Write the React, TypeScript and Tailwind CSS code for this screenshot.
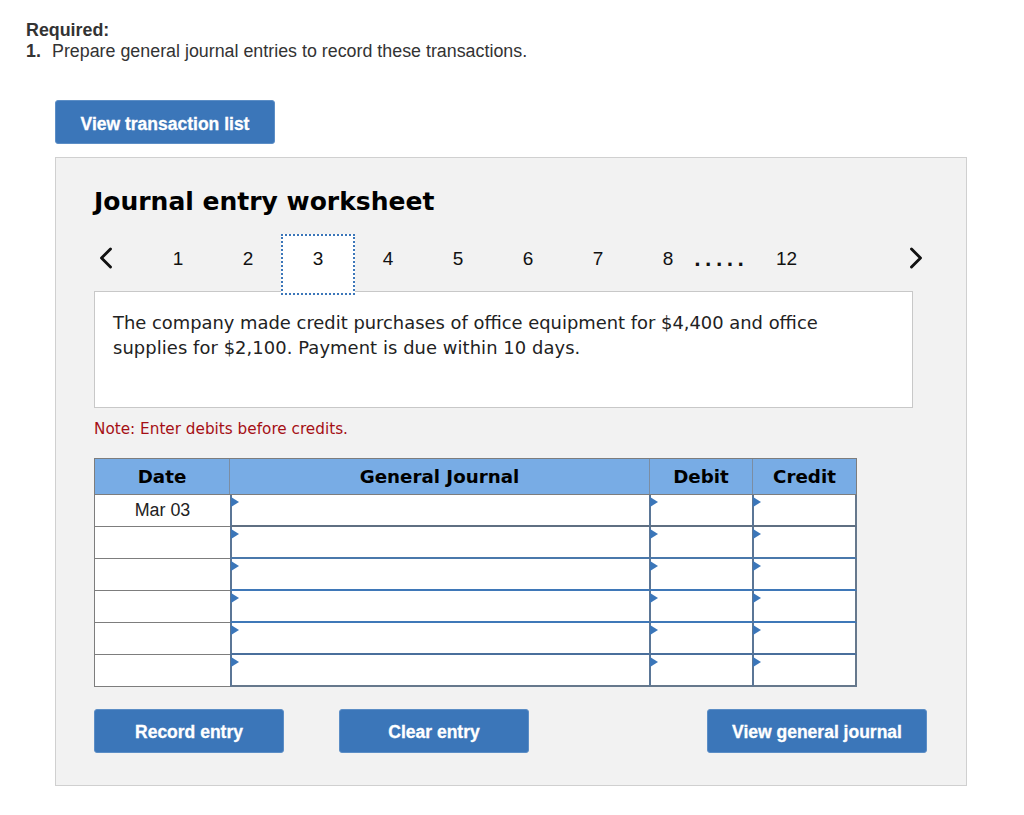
import React from 'react';
import { ChevronLeft, ChevronRight } from 'lucide-react';

const pages = ['1', '2', '3', '4', '5', '6', '7', '8'];

const verdana = "font-['DejaVu_Sans',sans-serif]";

function JournalCell({ line, last }: { line: string; last?: boolean }) {
  return (
    <div className={`relative bg-white border-b-2 border-l-2 ${line} border-l-[#5b7696] ${last ? 'border-r-2 border-r-[#66788c]' : ''}`}>
      <span className="absolute -left-px top-[2px] h-0 w-0 border-y-[5px] border-l-[8px] border-y-transparent border-l-[#3b76b9]" />
    </div>
  );
}

function BlueButton({ label, className }: { label: string; className: string }) {
  return (
    <button className={`h-[44px] rounded-[3px] border border-[#5c8ec6] bg-[#3b76b9] text-[17.5px] font-bold text-white [-webkit-text-stroke:0.3px_white] ${className}`}>
      {label}
    </button>
  );
}

export default function App() {
  const rows = [
    { date: 'Mar 03', line: 'border-[#5f6f82]' },
    { date: '', line: 'border-[#4a78ab]' },
    { date: '', line: 'border-[#3f78b8]' },
    { date: '', line: 'border-[#3f78b8]' },
    { date: '', line: 'border-[#4a6f9c]' },
    { date: '', line: 'border-[#66788c]' },
  ];

  return (
    <div className="h-[815px] w-[1024px] overflow-hidden bg-white pl-[26px] pt-[20px] font-['Liberation_Sans',Arial,sans-serif] text-[#333]">
      <div className="text-[17.85px] font-bold leading-[21px]">Required:</div>
      <div className="flex text-[17.85px] leading-[21px]">
        <span className="w-[26px] font-bold">1.</span>
        <span>Prepare general journal entries to record these transactions.</span>
      </div>

      <div className="ml-[29px] mt-[38px] w-[912px]">
        <BlueButton label="View transaction list" className="w-[220px] pt-[4px]" />

        <div className="mt-[13px] h-[629px] border border-[#d0d0d0] bg-[#f2f2f2] pl-[38px] pt-[27px]">
          <h2 className={`${verdana} text-[25px] font-bold leading-[34px] text-black`}>Journal entry worksheet</h2>

          <div className="ml-[-6px] mt-[15px] flex h-[61px] w-[846px] items-center pb-[11px] text-[19px] text-[#111]">
            <ChevronLeft className="mt-[-2px] h-[36px] w-[36px] shrink-0 text-[#111]" strokeWidth={1.9} />
            <div className="ml-[19px] flex">
              {pages.map((page) => (
                <div
                  key={page}
                  className={
                    page === '3'
                      ? 'relative z-10 mx-[-2px] mb-[-11px] flex h-[61px] w-[74px] items-center justify-center border-2 border-dotted border-[#3b76b9] bg-white pb-[11px]'
                      : 'flex h-[50px] w-[70px] items-center justify-center'
                  }
                >
                  {page}
                </div>
              ))}
            </div>
            <span className={`${verdana} ml-[-9px] w-[82px] text-[18px] font-bold tracking-[4px]`}>.....</span>
            <span>12</span>
            <ChevronRight className="ml-auto mt-[-2px] h-[36px] w-[36px] shrink-0 text-[#111]" strokeWidth={1.9} />
          </div>

          <div className={`${verdana} mt-[-4px] h-[117px] w-[819px] border border-[#c8c8c8] bg-white px-[18px] pt-[19px] text-[17.9px] leading-[24.5px] text-[#222]`}>
            The company made credit purchases of office equipment for $4,400 and office
            <br />
            <span className="tracking-[0.08px]">supplies for $2,100. Payment is due within 10 days.</span>
          </div>

          <p className={`${verdana} mt-[11px] text-[15.25px] leading-[20px] text-[#a50f15]`}>Note: Enter debits before credits.</p>

          <div className="mt-[19px] w-[763px]">
            <div className={`grid grid-cols-[135px_420px_103px_1fr] ${verdana} h-[37px] border border-[#7d7d7d] bg-[#78ace5] text-[18.25px] font-bold text-black`}>
              <div className="flex items-center justify-center border-r border-[#7b8da3]">Date</div>
              <div className="flex items-center justify-center border-r border-[#7b8da3]">General Journal</div>
              <div className="flex items-center justify-center border-r border-[#7b8da3]">Debit</div>
              <div className="flex items-center justify-center">Credit</div>
            </div>
            {rows.map((row, i) => (
              <div key={i} className="grid h-[32px] grid-cols-[136px_419px_103px_1fr]">
                <div className="flex items-center justify-center border-b border-l border-[#7d7d7d] bg-white text-[17.85px] text-[#222]">
                  {row.date}
                </div>
                <JournalCell line={row.line} />
                <JournalCell line={row.line} />
                <JournalCell line={row.line} last />
              </div>
            ))}
          </div>

          <div className="mt-[22px] flex w-[833px]">
            <BlueButton label="Record entry" className="w-[190px] pt-[2px]" />
            <BlueButton label="Clear entry" className="ml-[55px] w-[190px] pt-[2px]" />
            <BlueButton label="View general journal" className="ml-auto w-[220px] pt-[2px]" />
          </div>
        </div>
      </div>
    </div>
  );
}
